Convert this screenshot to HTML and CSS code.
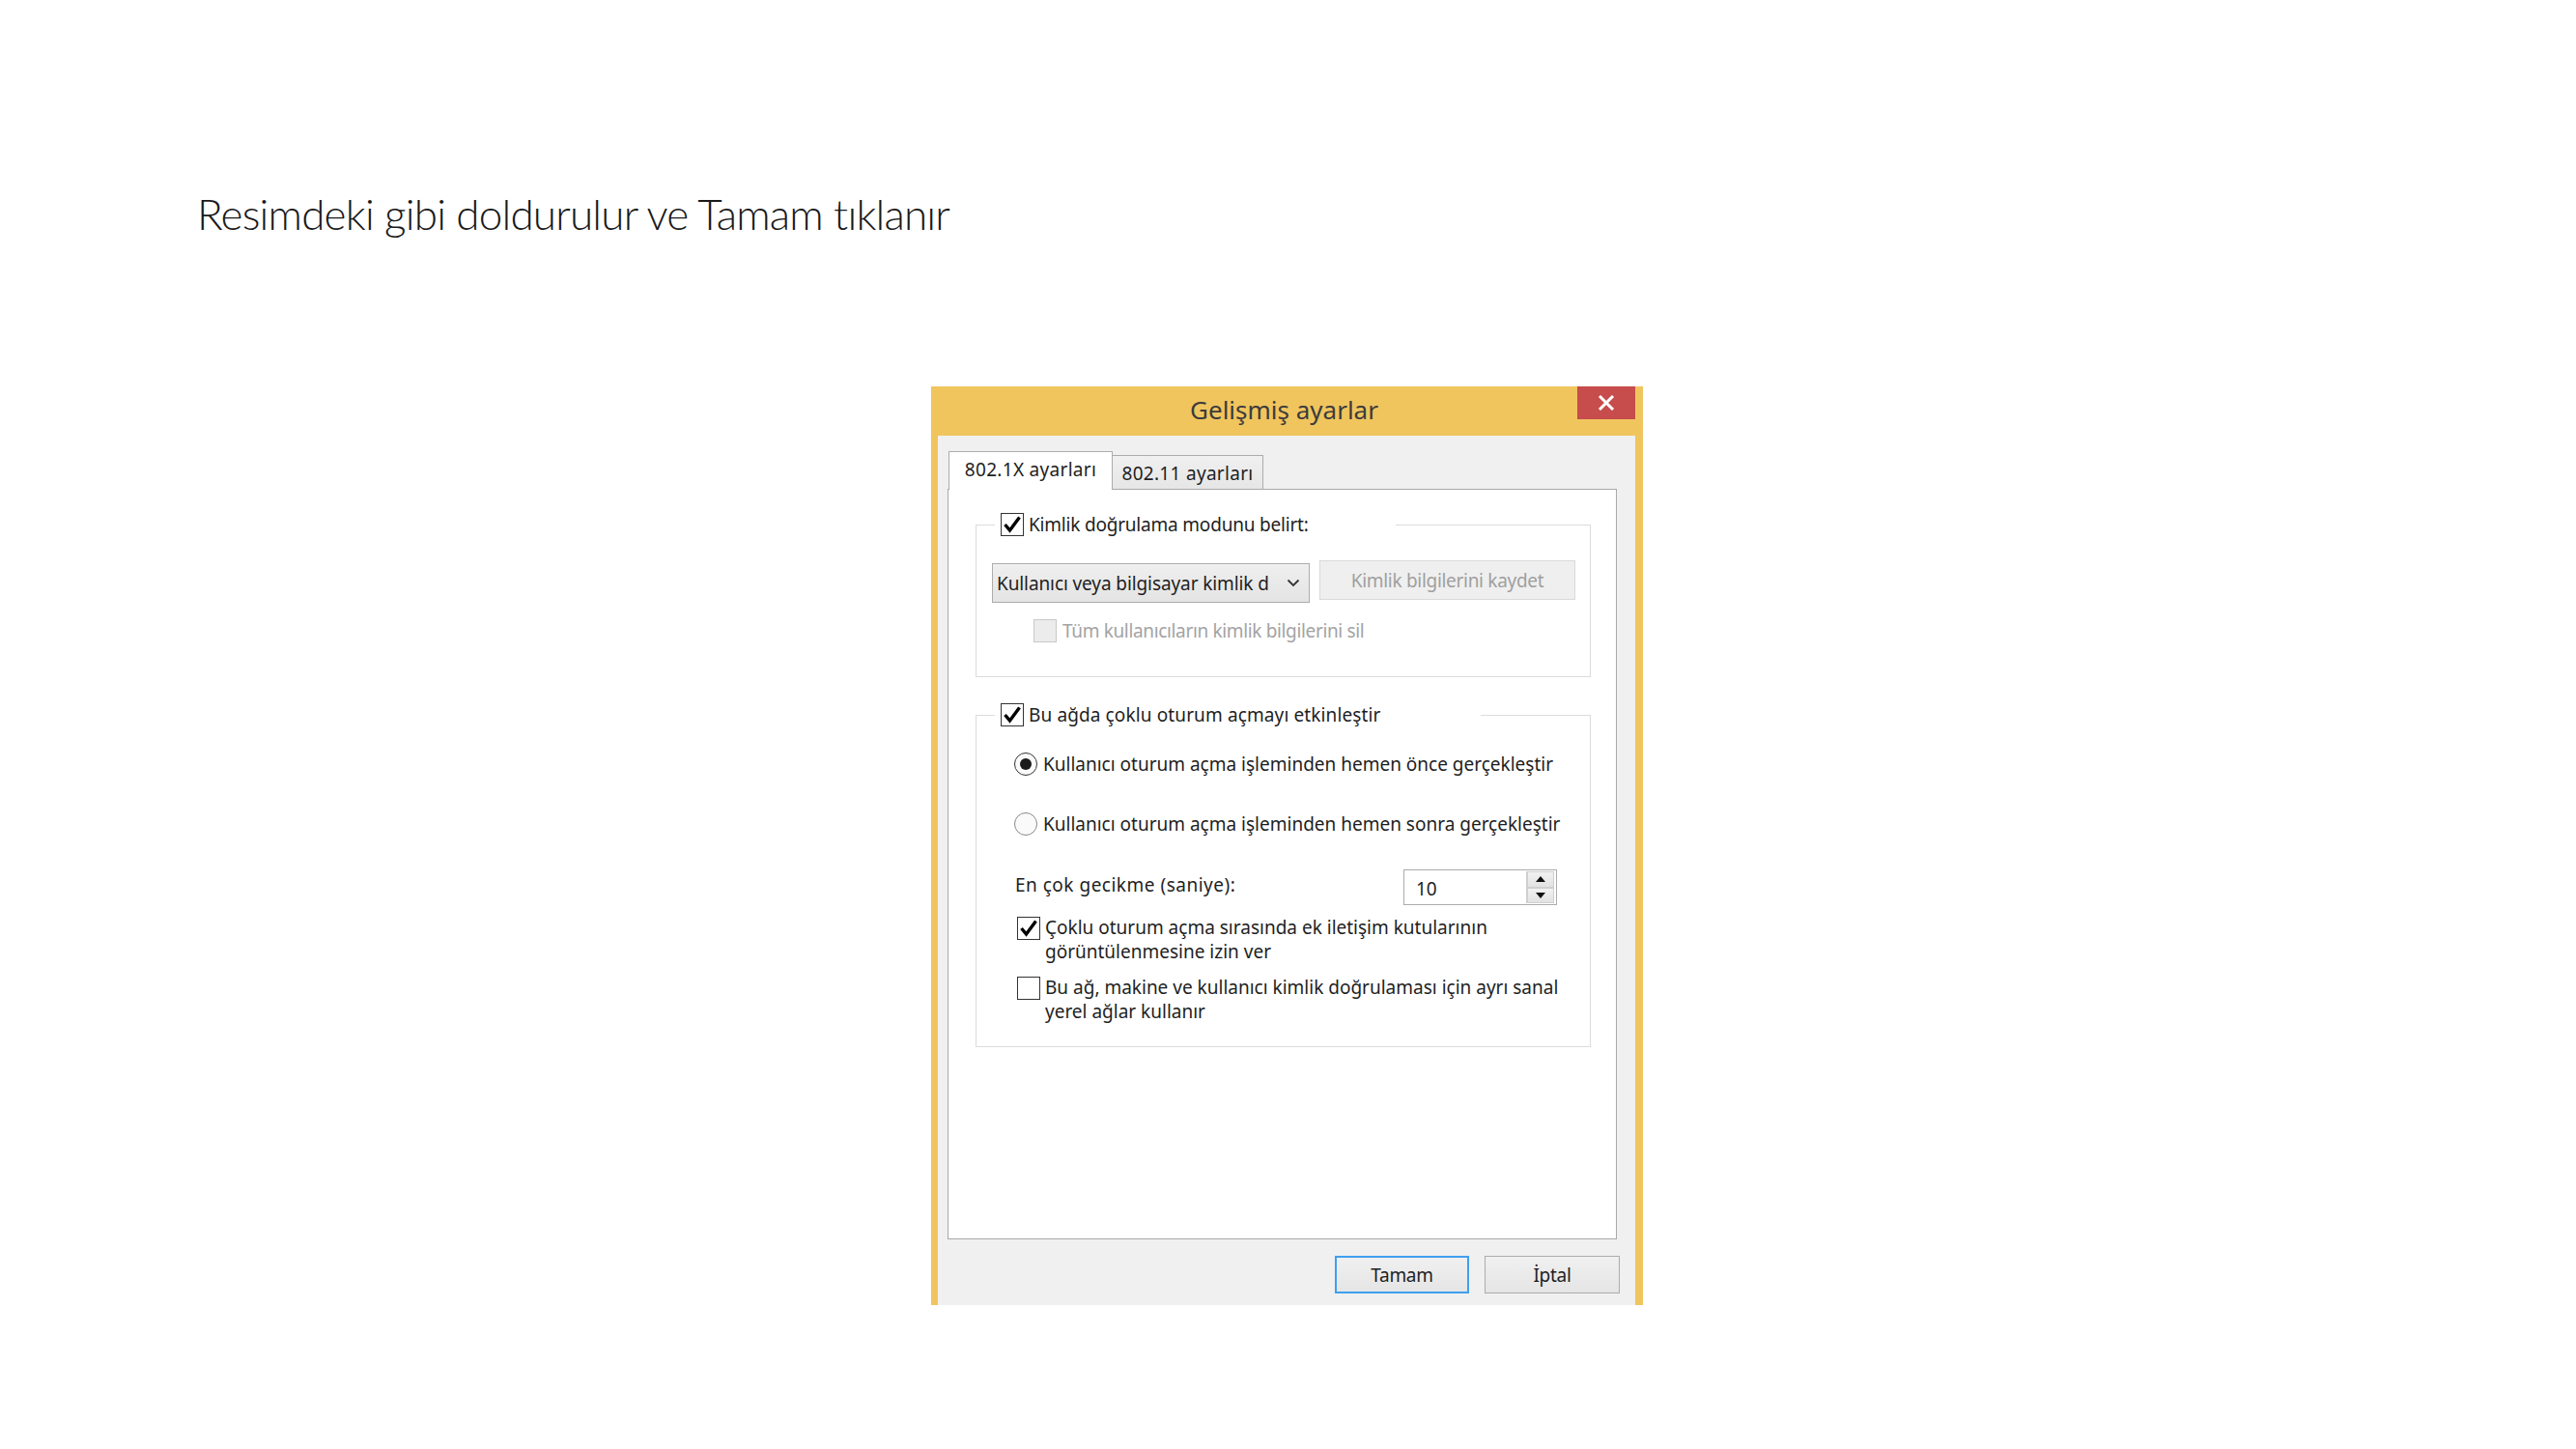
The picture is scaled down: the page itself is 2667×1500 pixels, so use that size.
FILE: index.html
```html
<!DOCTYPE html>
<html lang="tr">
<head>
<meta charset="utf-8">
<title>Gelişmiş ayarlar</title>
<link rel="stylesheet" href="styles.css">
</head>
<body>
<div class="slide">
  <h1 class="caption">Resimdeki gibi doldurulur ve Tamam tıklanır</h1>
  <div class="dialog">
    <div class="titlebar">
      <span class="title">Gelişmiş ayarlar</span>
      <div class="close">
        <svg width="18" height="16" viewBox="0 0 18 16"><path d="M2 1 L16 15 M16 1 L2 15" stroke="#fff" stroke-width="3" fill="none"/></svg>
      </div>
    </div>
    <div class="body">
      <div class="tabs">
        <div class="tab active">802.1X ayarları</div>
        <div class="tab">802.11 ayarları</div>
      </div>
      <div class="panel">
        <fieldset class="group group-auth">
          <legend class="legend legend-auth">
            <span class="check on"><svg width="22" height="22" viewBox="0 0 22 22"><path d="M3.5 11 L8.5 17 L18.5 3.5" stroke="#000" stroke-width="3.4" fill="none"/></svg></span>
            <span class="label">Kimlik doğrulama modunu belirt:</span>
          </legend>
          <div class="group-content auth-content">
            <div class="auth-row">
              <div class="select">
                <span class="select-text">Kullanıcı veya bilgisayar kimlik d</span>
                <svg class="select-arrow" width="14" height="9" viewBox="0 0 14 9"><path d="M1.5 1.5 L7 7 L12.5 1.5" stroke="#333" stroke-width="1.8" fill="none"/></svg>
              </div>
              <div class="btn btn-save">Kimlik bilgilerini kaydet</div>
            </div>
            <div class="option option-disabled">
              <span class="check dis"></span>
              <span class="label">Tüm kullanıcıların kimlik bilgilerini sil</span>
            </div>
          </div>
        </fieldset>
        <fieldset class="group group-sso">
          <legend class="legend legend-sso">
            <span class="check on"><svg width="22" height="22" viewBox="0 0 22 22"><path d="M3.5 11 L8.5 17 L18.5 3.5" stroke="#000" stroke-width="3.4" fill="none"/></svg></span>
            <span class="label">Bu ağda çoklu oturum açmayı etkinleştir</span>
          </legend>
          <div class="group-content sso-content">
            <div class="radio-row first">
              <span class="radio on"><span class="dot"></span></span>
              <span class="label">Kullanıcı oturum açma işleminden hemen önce gerçekleştir</span>
            </div>
            <div class="radio-row second">
              <span class="radio"></span>
              <span class="label">Kullanıcı oturum açma işleminden hemen sonra gerçekleştir</span>
            </div>
            <div class="delay-row">
              <span class="label">En çok gecikme (saniye):</span>
              <div class="spinner">
                <span class="spin-value">10</span>
                <div class="spin-buttons">
                  <div class="spin-btn"><svg width="10" height="6" viewBox="0 0 10 6"><path d="M5 0 L10 6 L0 6 Z" fill="#111"/></svg></div>
                  <div class="spin-btn"><svg width="10" height="6" viewBox="0 0 10 6"><path d="M0 0 L10 0 L5 6 Z" fill="#111"/></svg></div>
                </div>
              </div>
            </div>
            <div class="check-row row-dialogs">
              <span class="check on"><svg width="22" height="22" viewBox="0 0 22 22"><path d="M3.5 11 L8.5 17 L18.5 3.5" stroke="#000" stroke-width="3.4" fill="none"/></svg></span>
              <span class="label">Çoklu oturum açma sırasında ek iletişim kutularının<br>görüntülenmesine izin ver</span>
            </div>
            <div class="check-row row-vlan">
              <span class="check"></span>
              <span class="label">Bu ağ, makine ve kullanıcı kimlik doğrulaması için ayrı sanal<br>yerel ağlar kullanır</span>
            </div>
          </div>
        </fieldset>
      </div>
      <div class="actions">
        <div class="btn btn-primary">Tamam</div>
        <div class="btn">İptal</div>
      </div>
    </div>
  </div>
</div>
</body>
</html>
```
FILE: styles.css
```css
html, body {
  margin: 0;
  padding: 0;
  background: #ffffff;
}

.slide {
  width: 2667px;
  height: 1500px;
  overflow: hidden;
}

.caption {
  margin: 0 0 0 204px;
  padding-top: 199px;
  height: 44px;
  font-family: "Lato", "Open Sans", sans-serif;
  font-weight: 300;
  font-size: 44px;
  line-height: 44px;
  letter-spacing: -0.8px;
  color: #1a1a1a;
  white-space: nowrap;
}

.dialog {
  margin: 157px 0 0 964px;
  width: 737px;
  height: 951px;
  background: #f0c55e;
  display: flex;
  flex-direction: column;
  font-family: "Noto Sans", "Open Sans", sans-serif;
  font-size: 19px;
  color: #1e1e1e;
}

.titlebar {
  position: relative;
  height: 51px;
  display: flex;
  align-items: center;
  justify-content: center;
}

.title {
  font-size: 26px;
  color: #3c3c3c;
  margin-left: -6px;
  margin-top: -3px;
}

.close {
  position: absolute;
  top: 0;
  right: 8px;
  width: 60px;
  height: 34px;
  background: #c74c4c;
  display: flex;
  align-items: center;
  justify-content: center;
}

.body {
  flex: 1;
  margin: 0 8px 0 7px;
  background: #f0f0f0;
  padding-top: 16px;
  display: flex;
  flex-direction: column;
}

.tabs {
  display: flex;
  align-items: flex-end;
  margin-left: 11px;
  height: 39px;
}

.tab {
  box-sizing: border-box;
  height: 35px;
  width: 156px;
  border: 1px solid #acacac;
  border-bottom: none;
  border-left: none;
  background: linear-gradient(#f0f0f0, #e6e6e6);
  display: flex;
  align-items: center;
  justify-content: center;
  padding-top: 2px;
  letter-spacing: 0.3px;
}

.tab.active {
  position: relative;
  z-index: 1;
  width: 170px;
  height: 40px;
  margin-bottom: -1px;
  border-left: 1px solid #acacac;
  background: #ffffff;
  padding-top: 0;
  padding-bottom: 4px;
}

.panel {
  margin-left: 10px;
  width: 693px;
  height: 777px;
  box-sizing: border-box;
  background: #ffffff;
  border: 1px solid #a9a9a9;
  padding-left: 28px;
}

.group {
  margin: 0;
  padding: 0;
  width: 637px;
  box-sizing: border-box;
  border: 1px solid #dcdcdc;
  min-width: 0;
}

.group-auth {
  margin-top: 24px;
}

.group-sso {
  margin-top: 27px;
}

.legend {
  padding: 0 0 0 6px;
  margin-left: 19px;
  height: 24px;
  display: flex;
  align-items: center;
  box-sizing: border-box;
}

.legend-auth {
  width: 415px;
}

.legend-auth .label {
  letter-spacing: -0.2px;
}

.legend-sso {
  width: 503px;
}

.legend-sso .label {
  letter-spacing: 0.12px;
}

.legend .label {
  margin-left: 5px;
}

.check {
  box-sizing: border-box;
  width: 24px;
  height: 24px;
  flex: none;
  border: 1px solid #333333;
  background: #ffffff;
  display: flex;
  align-items: center;
  justify-content: center;
}

.check.dis {
  border-color: #c9c9c9;
  background: #ececec;
}

.auth-content {
  padding: 25px 0 35px 16px;
}

.auth-row {
  display: flex;
  align-items: flex-start;
}

.select {
  box-sizing: border-box;
  margin-top: 3px;
  width: 329px;
  height: 41px;
  border: 1px solid #acacac;
  background: linear-gradient(#efefef, #e4e4e4);
  display: flex;
  align-items: center;
  padding: 0 6px 0 4px;
}

.select-text {
  width: 300px;
  white-space: nowrap;
  letter-spacing: -0.1px;
}

.select-arrow {
  margin-left: 0;
}

.btn {
  box-sizing: border-box;
  height: 39px;
  width: 140px;
  border: 1px solid #acacac;
  background: linear-gradient(#f0f0f0, #e5e5e5);
  display: flex;
  align-items: center;
  justify-content: center;
  letter-spacing: -0.3px;
}

.btn-save {
  margin-left: 10px;
  width: 265px;
  height: 41px;
  border-color: #d9d9d9;
  background: #efefef;
  color: #9f9f9f;
}

.option {
  display: flex;
  align-items: center;
  margin-top: 17px;
  margin-left: 43px;
  height: 24px;
}

.option .label {
  margin-left: 6px;
  letter-spacing: -0.35px;
}

.option-disabled .label {
  color: #a3a3a3;
}

.sso-content {
  padding: 27px 34px 23px 0;
}

.radio-row {
  display: flex;
  align-items: center;
  height: 24px;
  margin-left: 39px;
}

.radio-row.second {
  margin-top: 38px;
}

.radio-row .label {
  margin-left: 6px;
  letter-spacing: 0;
  white-space: nowrap;
}

.radio {
  box-sizing: border-box;
  width: 24px;
  height: 24px;
  border-radius: 50%;
  border: 1px solid #8a8a8a;
  background: #fafafa;
  display: flex;
  align-items: center;
  justify-content: center;
  flex: none;
}

.radio.on {
  border-color: #333333;
}

.dot {
  width: 12px;
  height: 12px;
  border-radius: 50%;
  background: #1a1a1a;
}

.delay-row {
  display: flex;
  align-items: center;
  justify-content: space-between;
  margin: 35px 0 0 40px;
  height: 37px;
}

.delay-row .label {
  letter-spacing: 0.5px;
  margin-top: -5px;
}

.spinner {
  box-sizing: border-box;
  width: 159px;
  height: 37px;
  border: 1px solid #acacac;
  background: #ffffff;
  display: flex;
  align-items: center;
  justify-content: space-between;
  padding: 1px 2px 1px 12px;
}

.spin-value {
  margin-top: 2px;
}

.spin-buttons {
  display: flex;
  flex-direction: column;
  width: 28px;
  height: 33px;
  border-left: 1px solid #d0d0d0;
}

.spin-btn {
  flex: 1;
  background: linear-gradient(#f2f2f2, #e2e2e2);
  border: 1px solid #cfcfcf;
  display: flex;
  align-items: center;
  justify-content: center;
}

.check-row {
  display: flex;
  align-items: flex-start;
  margin-left: 42px;
  line-height: 25px;
}

.check-row .check {
  margin-top: 1px;
}

.check-row .label {
  margin-left: 5px;
  white-space: nowrap;
  letter-spacing: 0;
}

.row-dialogs {
  margin-top: 11px;
}

.row-vlan {
  margin-top: 12px;
}

.actions {
  display: flex;
  justify-content: flex-end;
  gap: 16px;
  margin-top: 17px;
  padding-right: 16px;
}

.btn-primary {
  width: 139px;
  border: 2px solid #3f9ff0;
}
```
